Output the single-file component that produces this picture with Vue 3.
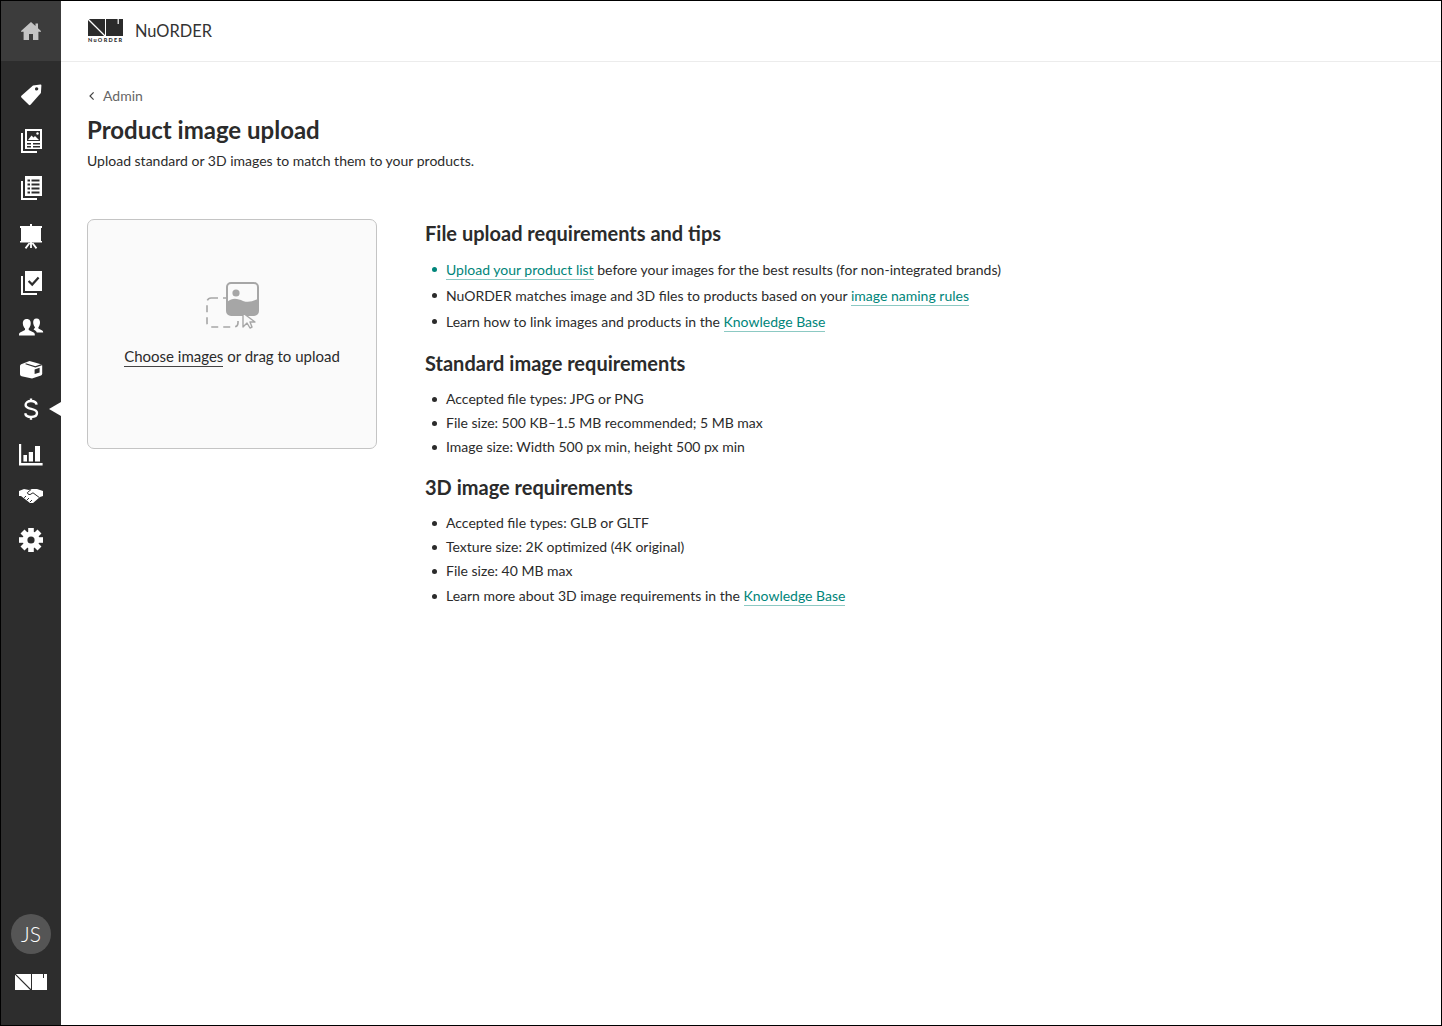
<script setup>
const navItems = [
  { name: 'tag', height: 46 },
  { name: 'images', height: 46 },
  { name: 'list', height: 48 },
  { name: 'board', height: 48 },
  { name: 'check', height: 46 },
  { name: 'people', height: 42 },
  { name: 'box', height: 42 },
  { name: 'dollar', height: 38 },
  { name: 'chart', height: 52 },
  { name: 'hands', height: 32 },
  { name: 'gear', height: 56 },
]
const gearTeeth = [0, 45, 90, 135]
</script>

<template>
  <div class="page">
    <aside class="sidebar">
      <div class="home">
        <svg width="24" height="24" viewBox="0 0 24 24">
          <path fill="#c4c4c4" d="M12 3 L16.5 7 V4.5 H19 V9.3 L22 12 V12.8 H19.4 V21 H14 V15 H10 V21 H4.6 V12.8 H2 V12 Z" />
        </svg>
      </div>
      <nav class="nav">
        <div
          v-for="item in navItems"
          :key="item.name"
          class="nav-item"
          :style="{ height: item.height + 'px' }"
        >
          <svg width="26" height="26" viewBox="0 0 26 26">
            <path v-if="item.name === 'tag'" fill="#fff" fill-rule="evenodd" d="M15 3.6 L22.4 2.6 Q23.5 2.5 23.4 3.6 L22.9 11 L12.5 22.8 Q11.6 23.6 10.8 22.8 L3.4 15.6 Q2.6 14.7 3.4 13.8 Z M18.6 5.2 A1.7 1.7 0 1 0 18.7 8.6 A1.7 1.7 0 1 0 18.6 5.2 Z" />
            <g v-else-if="item.name === 'images'">
              <path fill="none" stroke="#fff" stroke-width="2" d="M4 5 V24 H19" />
              <path fill="#fff" fill-rule="evenodd" d="M7 1 H24 V21 H7 Z M9 3 V13 H22 V3 Z M9 15 V16.5 H13 V15 Z M15 15 V16.5 H22 V15 Z M9 18 V19.5 H13 V18 Z M15 18 V19.5 H22 V18 Z" />
              <path fill="#fff" d="M10 12 L13.5 7.5 L15.5 9.5 L17 8 L21 12 Z" />
              <circle cx="19.5" cy="5.5" r="1.2" fill="#fff" />
            </g>
            <g v-else-if="item.name === 'list'">
              <path fill="none" stroke="#fff" stroke-width="2" d="M4 6 V24 H19" />
              <path fill="#fff" fill-rule="evenodd" d="M7 1 H24 V21 H7 Z M9.5 4.5 V6.5 H12 V4.5 Z M13.5 4.5 V6.5 H21.5 V4.5 Z M9.5 8.5 V10.5 H12 V8.5 Z M13.5 8.5 V10.5 H21.5 V8.5 Z M9.5 12.5 V14.5 H12 V12.5 Z M13.5 12.5 V14.5 H21.5 V12.5 Z M9.5 16.5 V18.5 H12 V16.5 Z M13.5 16.5 V18.5 H21.5 V16.5 Z" />
            </g>
            <g v-else-if="item.name === 'board'">
              <path fill="#fff" d="M12 1 H14 V3 H24 V5 H23 V18 H24 V19.5 H2 V18 H3 V5 H2 V3 H12 Z" />
              <path fill="none" stroke="#fff" stroke-width="1.8" d="M13 19 V25 M11.6 20 L7.5 25.4 M14.4 20 L18.5 25.4" />
            </g>
            <g v-else-if="item.name === 'check'">
              <path fill="none" stroke="#fff" stroke-width="2" d="M4 6 V24 H19" />
              <path fill="#fff" d="M7 1 H24 V21 H7 Z" />
              <path fill="none" stroke="#2d2d2d" stroke-width="2.2" d="M10.6 11 L14.2 14.6 L20.6 7.6" />
            </g>
            <g v-else-if="item.name === 'people'" fill="#fff">
              <path d="M8.8 5 C11.8 5 13 7.2 12.7 10 C12.5 12 11.7 13.4 10.7 14.6 V16 L15.7 18.5 Q16.8 19 16.8 20.6 V21.5 H1 V20.6 Q1 19 2.1 18.5 L7 16 V14.6 C6 13.4 5.1 12 4.9 10 C4.6 7.2 5.8 5 8.8 5 Z" />
              <path d="M18.5 4.5 C21.2 4.5 22.2 6.5 22 9 C21.8 11 21.2 12.2 20.4 13.2 V14.5 L24.2 16.6 Q25.2 17.2 25.2 18.5 H18.8 Q18.6 17.4 17.2 16.6 L15.6 15.6 C15.9 14.8 16.7 14.2 17 13.2 C16.2 12.2 15.4 11 15.2 9 C15 6.5 15.9 4.5 18.5 4.5 Z" />
            </g>
            <g v-else-if="item.name === 'box'">
              <path fill="#fff" d="M2 10 Q2 8.8 3.2 8.3 L11.5 5 L23 8.2 Q24.2 8.6 24.2 9.8 V17.5 Q24.2 19 23 19.6 L14 22.6 L3.6 20.2 Q2 19.8 2 18.2 Z" />
              <path fill="none" stroke="#2d2d2d" stroke-width="1.2" d="M7.6 7.8 L17.4 10.8 L23.8 8.6" />
              <path fill="#2d2d2d" d="M16.6 13.4 L21.6 11.8 V16.4 L16.6 18 Z" />
            </g>
            <path v-else-if="item.name === 'dollar'" fill="none" stroke="#fff" stroke-width="2.4" d="M18.6 8.6 C18.2 6 15.8 5 13 5 C9.8 5 7.6 6.6 7.6 9 C7.6 14.4 19 11.4 19 17 C19 19.6 16.4 21 13 21 C9.8 21 7.6 19.6 7.2 17.2 M13 2.4 V5 M13 21 V23.8" />
            <g v-else-if="item.name === 'chart'" fill="#fff">
              <path d="M1 3 H3.2 V22 H24.6 V24.5 H1 Z" />
              <path d="M5.4 14 H9 V20.6 H5.4 Z M10.8 11 H15 V20.6 H10.8 Z M17 5 H22 V20.6 H17 Z" />
            </g>
            <g v-else-if="item.name === 'hands'">
              <path fill="#fff" d="M1 8 L6 6 L11 7 L14 6 L19 6 L25 8 V13 L22 14 L15 20 H12 L3 13 H1 Z" />
              <path fill="none" stroke="#2d2d2d" stroke-width="1" d="M13 6.6 L9.4 9.6 Q9.4 11.6 12 11.6 L15 9.8 L21.4 14.6 M6.2 14.8 L8 13 M9 17 L11 15 M12 19 L14 17" />
            </g>
            <g v-else-if="item.name === 'gear'" fill="#fff">
              <rect
                v-for="angle in gearTeeth"
                :key="angle"
                x="10.2"
                y="1"
                width="5.6"
                height="24"
                :transform="`rotate(${angle} 13 13)`"
              />
              <circle cx="13" cy="13" r="8.4" />
              <circle cx="13" cy="13" r="3.6" fill="#2d2d2d" />
            </g>
          </svg>
          <span v-if="item.name === 'dollar'" class="nav-pointer"></span>
        </div>
      </nav>
      <div class="side-bottom">
        <div class="avatar">JS</div>
        <svg class="side-logo" width="32" height="16" viewBox="0 0 32 16">
          <path fill="#fff" d="M0 0 H16 V16 H0 Z M17 0 H32 V16 H17 Z" />
          <path fill="none" stroke="#2d2d2d" stroke-width="1.2" d="M0 0 L16 16" />
          <path fill="#2d2d2d" d="M28 0 H29 V4 H28 Z" />
        </svg>
      </div>
    </aside>

    <div class="main">
      <header class="topbar">
        <div class="brand-logo">
          <svg width="35" height="17" viewBox="0 0 35 17">
            <path fill="#2b2b2b" d="M0 0 H17 V17 H0 Z M18 0 H35 V17 H18 Z" />
            <path fill="none" stroke="#fff" stroke-width="1.3" d="M0 0 L17 17" />
            <path fill="#fff" d="M29.6 0 H30.8 V5 H29.6 Z" />
          </svg>
          <span class="brand-mini">NuORDER</span>
        </div>
        <span class="brand-name">NuORDER</span>
      </header>

      <main class="content">
        <a class="back">
          <svg width="8" height="10" viewBox="0 0 8 10">
            <path fill="none" stroke="#444" stroke-width="1.2" d="M5.6 1.4 L2 5 L5.6 8.6" />
          </svg>
          Admin
        </a>
        <h1>Product image upload</h1>
        <p class="subtitle">Upload standard or 3D images to match them to your products.</p>

        <div class="columns">
          <div class="dropzone">
            <svg class="drop-icon" width="54" height="48" viewBox="0 0 54 48">
              <rect x="1" y="16" width="31" height="29" rx="4" fill="none" stroke="#a6a6a6" stroke-width="1.6" stroke-dasharray="7 5" />
              <rect x="21" y="1" width="31" height="32" rx="4" fill="#fafafa" stroke="#a6a6a6" stroke-width="2" />
              <path fill="#a6a6a6" d="M21 20 C27 15 32 17 37 19 C43 21 47 19 52 17 V29 Q52 33 48 33 H25 Q21 33 21 29 Z" />
              <circle cx="30" cy="11" r="3.6" fill="#a6a6a6" />
              <path fill="#fafafa" stroke="#a6a6a6" stroke-width="1.4" stroke-linejoin="round" d="M37 31 V45 L41 41 L44 46 L46 45 L44 40 L49 40 Z" />
            </svg>
            <div class="drop-text"><span class="choose">Choose images</span> or drag to upload</div>
          </div>

          <div class="info">
            <h2>File upload requirements and tips</h2>
            <ul class="tips">
              <li class="first"><a>Upload your product list</a> before your images for the best results (for non-integrated brands)</li>
              <li>NuORDER matches image and 3D files to products based on your <a>image naming rules</a></li>
              <li>Learn how to link images and products in the <a>Knowledge Base</a></li>
            </ul>

            <h2>Standard image requirements</h2>
            <ul>
              <li>Accepted file types: JPG or PNG</li>
              <li>File size: 500 KB–1.5 MB recommended; 5 MB max</li>
              <li>Image size: Width 500 px min, height 500 px min</li>
            </ul>

            <h2>3D image requirements</h2>
            <ul>
              <li>Accepted file types: GLB or GLTF</li>
              <li>Texture size: 2K optimized (4K original)</li>
              <li>File size: 40 MB max</li>
              <li class="with-link">Learn more about 3D image requirements in the <a>Knowledge Base</a></li>
            </ul>
          </div>
        </div>
      </main>
    </div>
  </div>
</template>

<style>
html, body {
  margin: 0;
  background: #fff;
}
</style>

<style scoped>
.page {
  display: flex;
  box-sizing: border-box;
  height: 1026px;
  width: 1442px;
  border: 1px solid #000;
  font-family: Lato, "Liberation Sans", sans-serif;
  color: #2b2b2b;
  overflow: hidden;
}

.sidebar {
  width: 60px;
  flex-shrink: 0;
  background: #2d2d2d;
  display: flex;
  flex-direction: column;
}

.home {
  height: 60px;
  background: #3c3c3c;
  display: flex;
  align-items: center;
  justify-content: center;
}

.nav {
  margin-top: 11px;
  display: flex;
  flex-direction: column;
}

.nav-item {
  position: relative;
  display: flex;
  align-items: center;
  justify-content: center;
}

.nav-pointer {
  position: absolute;
  right: 0;
  top: 50%;
  margin-top: -7px;
  border-top: 7px solid transparent;
  border-bottom: 7px solid transparent;
  border-right: 12px solid #fff;
}

.side-bottom {
  margin-top: auto;
  padding-bottom: 35px;
  display: flex;
  flex-direction: column;
  align-items: center;
  gap: 20px;
}

.avatar {
  width: 40px;
  height: 40px;
  border-radius: 50%;
  background: #555;
  color: #fff;
  font-size: 21px;
  font-weight: 300;
  line-height: 39px;
  text-align: center;
}

.side-logo {
  display: block;
}

.main {
  flex: 1;
  min-width: 0;
}

.topbar {
  height: 61px;
  box-sizing: border-box;
  border-bottom: 1px solid #ececec;
  padding-left: 27px;
  padding-bottom: 1px;
  display: flex;
  align-items: center;
  gap: 12px;
}

.brand-logo {
  display: flex;
  flex-direction: column;
  gap: 1.5px;
  width: 35px;
  margin-top: 2px;
}

.brand-logo svg {
  display: block;
}

.brand-mini {
  font-size: 5.5px;
  font-weight: 900;
  letter-spacing: 1.3px;
  line-height: 7px;
  white-space: nowrap;
}

.brand-name {
  font-size: 16.4px;
  color: #333;
}

.content {
  padding: 25px 26px 0;
}

.back {
  display: flex;
  align-items: center;
  gap: 7px;
  font-size: 14px;
  line-height: 18px;
  color: #666;
  padding-left: 1px;
}

h1 {
  margin: 9px 0 0;
  font-size: 24px;
  line-height: 32px;
  font-weight: 700;
  color: #2b2b2b;
}

.subtitle {
  margin: 5px 0 0;
  font-size: 14px;
  line-height: 20px;
}

.columns {
  display: flex;
  margin-top: 48px;
  gap: 48px;
}

.dropzone {
  width: 290px;
  height: 230px;
  box-sizing: border-box;
  flex-shrink: 0;
  border: 1px solid #c4c4c4;
  border-radius: 7px;
  background: #fafafa;
  display: flex;
  flex-direction: column;
  align-items: center;
  padding-top: 62px;
}

.drop-icon {
  display: block;
  margin-left: 2px;
}

.drop-text {
  margin-top: 16px;
  font-size: 15px;
  line-height: 20px;
}

.choose {
  border-bottom: 1px solid #444;
  padding-bottom: 1px;
}

.info {
  flex: 1;
}

h2 {
  margin: 0;
  font-size: 20px;
  line-height: 28px;
  font-weight: 700;
  color: #2b2b2b;
}

ul {
  list-style: none;
  margin: 10px 0 14px;
  padding: 0;
}

li {
  position: relative;
  padding-left: 21px;
  font-size: 14px;
  line-height: 24px;
}

li::before {
  content: "";
  position: absolute;
  left: 7px;
  top: 10px;
  width: 5px;
  height: 5px;
  border-radius: 50%;
  background: #2b2b2b;
}

li.first::before {
  background: #00857a;
}

li.with-link {
  margin-top: 1px;
}

.tips li {
  line-height: 26px;
}

a {
  color: #00857a;
}

li a {
  border-bottom: 1px solid #8cc9c3;
  padding-bottom: 1px;
}
</style>
